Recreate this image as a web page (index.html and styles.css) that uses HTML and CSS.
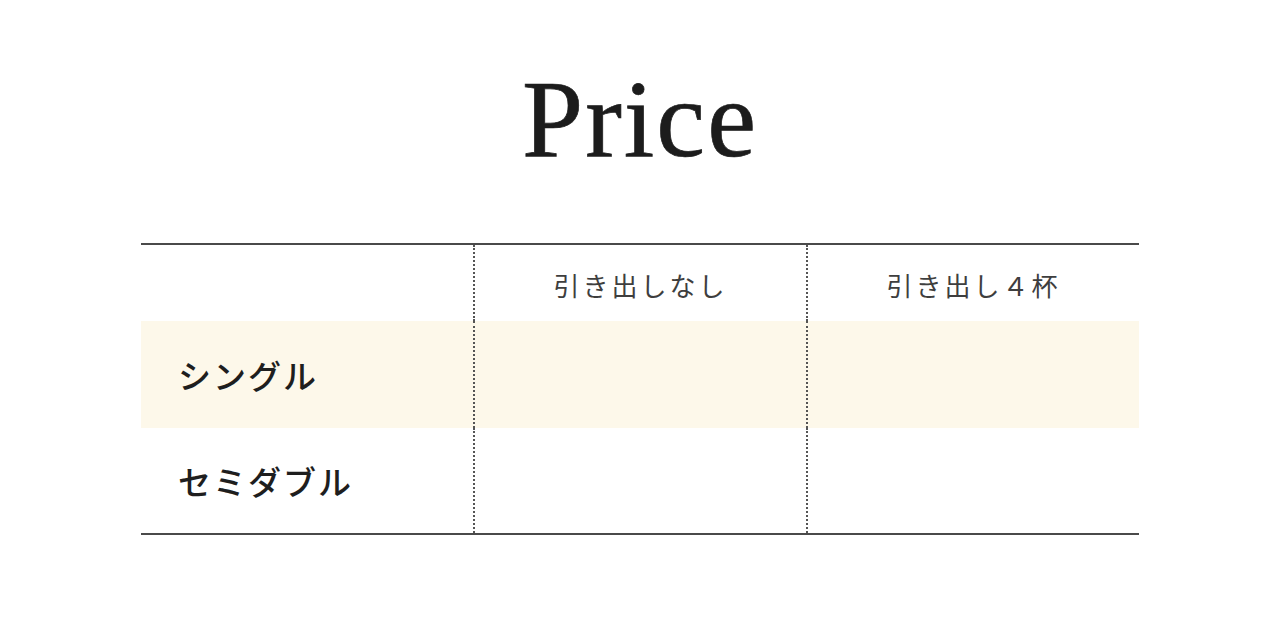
FILE: index.html
```html
<!DOCTYPE html>
<html lang="ja">
<head>
<meta charset="utf-8">
<title>Price</title>
<link rel="stylesheet" href="styles.css">
</head>
<body>
<main class="page">
  <h1 class="title">Price</h1>
  <div class="price-table">
    <div class="cell head corner"></div>
    <div class="cell head col">引き出しなし</div>
    <div class="cell head col">引き出し４杯</div>

    <div class="cell label shade">シングル</div>
    <div class="cell col shade"></div>
    <div class="cell col shade"></div>

    <div class="cell label">セミダブル</div>
    <div class="cell col"></div>
    <div class="cell col"></div>
  </div>
</main>
</body>
</html>
```

FILE: styles.css
```css
html, body {
  margin: 0;
  padding: 0;
  background: #ffffff;
}

.page {
  width: 1280px;
  display: flex;
  flex-direction: column;
  align-items: center;
}

.title {
  margin: 62px 0 0;
  font-family: "Liberation Serif", "DejaVu Serif", serif;
  font-weight: 400;
  font-size: 110px;
  line-height: 114px;
  height: 114px;
  color: #1c1c1c;
  letter-spacing: 2px;
  -webkit-text-stroke: 0.7px #1c1c1c;
}

.price-table {
  margin-top: 67px;
  width: 998px;
  display: grid;
  grid-template-columns: 332px 333px 333px;
  grid-template-rows: 76px 107px 105px;
  border-top: 2px solid #4a4a4a;
  border-bottom: 2px solid #4a4a4a;
  font-family: "Noto Sans CJK JP", "Noto Sans", sans-serif;
}

.cell {
  display: flex;
  align-items: center;
}

.col {
  border-left: 2px dotted #555555;
  justify-content: center;
}

.head {
  font-size: 26px;
  font-weight: 400;
  color: #3e3e3e;
  letter-spacing: 3px;
  padding-top: 2px;
}

.label {
  padding-left: 37px;
  font-size: 33px;
  font-weight: 500;
  color: #1e1e1e;
  letter-spacing: 2px;
}

.shade {
  background: #fdf8ea;
}
```
